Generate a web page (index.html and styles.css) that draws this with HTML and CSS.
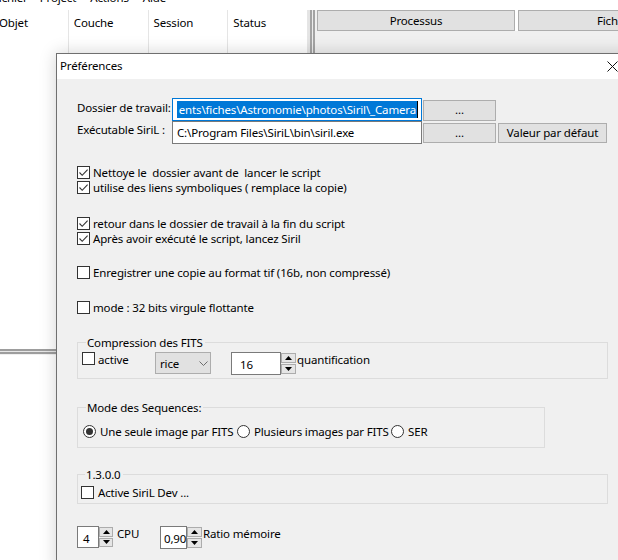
FILE: index.html
```html
<!DOCTYPE html>
<html lang="fr">
<head>
<meta charset="utf-8">
<title>Préférences</title>
<link rel="stylesheet" href="styles.css">
</head>
<body>
<div class="app">
  <div class="menubar">
    <span class="menu menu-first">Fichier</span>
    <span class="menu menu-project">Project</span>
    <span class="menu menu-actions">Actions</span>
    <span class="menu menu-aide">Aide</span>
  </div>
  <div class="main">
    <div class="left">
      <div class="thead">
        <div class="th th-first">Objet</div>
        <div class="th">Couche</div>
        <div class="th">Session</div>
        <div class="th">Status</div>
      </div>
      <div class="lbody"></div>
      <div class="hsplit"></div>
      <div class="lbody2"></div>
    </div>
    <div class="vsplit"></div>
    <div class="right">
      <div class="tabs">
        <div class="tabbtn">Processus</div>
        <div class="tabbtn">Fichiers</div>
      </div>
    </div>
  </div>

  <div class="dialog">
    <div class="titlebar">
      <span class="title">Préférences</span>
      <svg class="close" width="11" height="11" viewBox="0 0 11 11"><path d="M0.5 0.5 L10.5 10.5 M10.5 0.5 L0.5 10.5" stroke="#111" stroke-width="1" fill="none"/></svg>
    </div>
    <div class="dbody">
      <div class="path-row row-1">
        <div class="plabel plabel-1">Dossier de travail:</div>
        <div class="pinput pinput-focus"><span class="sel">ents\fiches\Astronomie\photos\Siril\_Camera</span><span class="caret"></span></div>
        <div class="btn btn-dots btn-dots-1">...</div>
      </div>
      <div class="path-row row-2">
        <div class="plabel plabel-2">Exécutable SiriL :</div>
        <div class="pinput">C:\Program Files\SiriL\bin\siril.exe</div>
        <div class="btn btn-dots btn-dots-2">...</div>
        <div class="btn btn-default">Valeur par défaut</div>
      </div>

      <div class="checks checks-a">
        <div class="check"><span class="cb"><svg width="11" height="11" viewBox="0 0 11 11"><path d="M1.5 5.5 L4.2 8.3 L9.6 2.6" stroke="#333" stroke-width="1.1" fill="none"/></svg></span><span class="ctext">Nettoye le&nbsp; dossier avant de&nbsp; lancer le script</span></div>
        <div class="check"><span class="cb"><svg width="11" height="11" viewBox="0 0 11 11"><path d="M1.5 5.5 L4.2 8.3 L9.6 2.6" stroke="#333" stroke-width="1.1" fill="none"/></svg></span><span class="ctext">utilise des liens symboliques ( remplace la copie)</span></div>
      </div>
      <div class="checks checks-b">
        <div class="check"><span class="cb"><svg width="11" height="11" viewBox="0 0 11 11"><path d="M1.5 5.5 L4.2 8.3 L9.6 2.6" stroke="#333" stroke-width="1.1" fill="none"/></svg></span><span class="ctext">retour dans le dossier de travail à la fin du script</span></div>
        <div class="check"><span class="cb"><svg width="11" height="11" viewBox="0 0 11 11"><path d="M1.5 5.5 L4.2 8.3 L9.6 2.6" stroke="#333" stroke-width="1.1" fill="none"/></svg></span><span class="ctext">Après avoir exécuté le script, lancez Siril</span></div>
      </div>
      <div class="checks checks-c">
        <div class="check"><span class="cb"></span><span class="ctext">Enregistrer une copie au format tif (16b, non compressé)</span></div>
      </div>
      <div class="checks checks-d">
        <div class="check"><span class="cb"></span><span class="ctext">mode : 32 bits virgule flottante</span></div>
      </div>

      <fieldset class="group group-fits">
        <legend class="glegend glegend-fits">Compression des FITS</legend>
        <div class="fits-row">
          <div class="check check-top fits-active"><span class="cb"></span><span class="ctext">active</span></div>
          <div class="select">
            <span class="select-text">rice</span>
            <svg class="chev" width="9" height="5" viewBox="0 0 9 5"><path d="M0.5 0.5 L4.5 4.5 L8.5 0.5" stroke="#6d6d6d" stroke-width="1" fill="none"/></svg>
          </div>
          <div class="spin spin-q">
            <div class="spin-input spin-input-q">16</div>
            <div class="spin-btns">
              <div class="spin-btn"><svg width="7" height="4" viewBox="0 0 7 4"><path d="M0 4 L3.5 0 L7 4 Z" fill="#000"/></svg></div>
              <div class="spin-btn"><svg width="7" height="4" viewBox="0 0 7 4"><path d="M0 0 L3.5 4 L7 0 Z" fill="#000"/></svg></div>
            </div>
          </div>
          <span class="spin-label spin-label-q">quantification</span>
        </div>
      </fieldset>

      <fieldset class="group group-mode">
        <legend class="glegend glegend-mode">Mode des Sequences:</legend>
        <div class="radio-row">
          <div class="radio-item"><span class="radio radio-on"><span class="dot"></span></span><span class="ctext">Une seule image par FITS</span></div>
          <div class="radio-item"><span class="radio"></span><span class="ctext">Plusieurs images par FITS</span></div>
          <div class="radio-item radio-last"><span class="radio"></span><span class="ctext">SER</span></div>
        </div>
      </fieldset>

      <fieldset class="group group-ver">
        <legend class="glegend glegend-ver">1.3.0.0</legend>
        <div class="ver-row">
          <div class="check check-ver"><span class="cb"></span><span class="ctext">Active SiriL Dev ...</span></div>
        </div>
      </fieldset>

      <div class="cpu-row">
        <div class="spin spin-cpu">
          <div class="spin-input spin-input-cpu">4</div>
          <div class="spin-btns">
            <div class="spin-btn"><svg width="7" height="4" viewBox="0 0 7 4"><path d="M0 4 L3.5 0 L7 4 Z" fill="#000"/></svg></div>
            <div class="spin-btn"><svg width="7" height="4" viewBox="0 0 7 4"><path d="M0 0 L3.5 4 L7 0 Z" fill="#000"/></svg></div>
          </div>
          <span class="spin-label spin-label-cpu">CPU</span>
        </div>
        <div class="spin spin-mem">
          <div class="spin-input spin-input-mem">0,90</div>
          <div class="spin-btns">
            <div class="spin-btn"><svg width="7" height="4" viewBox="0 0 7 4"><path d="M0 4 L3.5 0 L7 4 Z" fill="#000"/></svg></div>
            <div class="spin-btn"><svg width="7" height="4" viewBox="0 0 7 4"><path d="M0 0 L3.5 4 L7 0 Z" fill="#000"/></svg></div>
          </div>
          <span class="spin-label spin-label-mem">Ratio mémoire</span>
        </div>
      </div>
    </div>
  </div>
</div>
</body>
</html>
```

FILE: styles.css
```css
* { box-sizing: border-box; }
html, body { margin: 0; padding: 0; }
body {
  font-family: "Noto Sans", "Open Sans", sans-serif;
  font-size: 11.5px;
  letter-spacing: -0.15px;
  color: #000;
  background: #fff;
}
.app {
  position: relative;
  width: 618px;
  height: 560px;
  overflow: hidden;
  background: #fff;
}

/* background application */
.menubar {
  height: 10px;
  overflow: hidden;
  background: #fff;
  display: flex;
  white-space: nowrap;
}
.menu {
  display: block;
  line-height: 15px;
  margin-top: -10px;
  color: #000;
}
.menu-first { margin-left: -7px; }
.menu-project { margin-left: 12px; }
.menu-actions { margin-left: 14px; }
.menu-aide { margin-left: 14px; }

.main {
  display: flex;
  height: 550px;
}
.left {
  width: 308px;
  display: flex;
  flex-direction: column;
  background: #fff;
}
.thead {
  display: flex;
  height: 43px;
}
.th {
  width: 80px;
  border-right: 1px solid #e5e5e5;
  padding: 5px 0 0 5px;
  line-height: 15px;
  white-space: nowrap;
}
.th-first {
  width: 69px;
  padding-left: 0;
  text-indent: -1px;
}
.lbody { height: 295px; }
.hsplit {
  height: 7px;
  background: linear-gradient(to bottom, #fff 0, #fff 1px, #9d9d9d 1px, #9d9d9d 3px, #e6e6e6 3px, #e6e6e6 4px, #9d9d9d 4px, #9d9d9d 6px, #f0f0f0 6px);
}
.lbody2 { flex: 1; }
.vsplit {
  width: 9px;
  background: linear-gradient(to right, #e4e4e4 0, #e4e4e4 2px, #a3a3a3 2px, #a3a3a3 4px, #ececec 4px, #ececec 5px, #a3a3a3 5px, #a3a3a3 7px, #f0f0f0 7px);
}
.right {
  flex: 1;
  background: #f0f0f0;
  overflow: hidden;
}
.tabs {
  display: flex;
  gap: 3px;
  background: #fff;
}
.tabbtn {
  flex: 0 0 198px;
  height: 21px;
  background: #e1e1e1;
  border: 1px solid #adadad;
  text-align: center;
  line-height: 19px;
  white-space: nowrap;
}

/* dialog window */
.dialog {
  position: absolute;
  left: 56px;
  top: 53px;
  width: 580px;
  height: 520px;
  border: 1px solid #6f6f6f;
  background: #f0f0f0;
  box-shadow: 0 0 16px rgba(0, 0, 0, 0.18);
}
.titlebar {
  height: 25px;
  background: #fff;
  display: flex;
  align-items: center;
  padding-left: 3px;
}
.title {
  line-height: 15px;
  width: 547px;
  margin-top: -3px;
}
.close {
  margin-top: -1px;
}
.dbody {
  padding: 19px 0 0 20px;
}

.path-row {
  display: flex;
  height: 23px;
}
.plabel {
  width: 95px;
  line-height: 15px;
  white-space: nowrap;
}
.plabel-1 { padding-top: 2px; }
.plabel-2 { padding-top: 1px; }
.pinput {
  width: 250px;
  height: 23px;
  border: 1px solid #7a7a7a;
  background: #fff;
  padding: 2px 0 0 4px;
  line-height: 17px;
  white-space: nowrap;
  overflow: hidden;
  display: flex;
}
.pinput-focus {
  border-color: #0078d7;
  padding-left: 0;
  padding-right: 3px;
  justify-content: flex-end;
}
.sel {
  background: #0078d7;
  color: #fff;
  padding: 0 1px 0 2px;
  height: 17px;
  flex-shrink: 0;
}
.caret {
  width: 1px;
  height: 17px;
  background: #000;
  flex-shrink: 0;
}
.btn {
  background: #e1e1e1;
  border: 1px solid #adadad;
  text-align: center;
  white-space: nowrap;
}
.btn-dots {
  width: 73px;
  margin-left: 1px;
}
.btn-dots-1 { height: 21px; margin-top: 2px; line-height: 17px; }
.btn-dots-2 { height: 20px; margin-top: 2px; line-height: 17px; }
.btn-default {
  width: 109px;
  height: 20px;
  margin-top: 2px;
  margin-left: 2px;
  line-height: 18px;
}

/* checkboxes */
.checks { display: flex; flex-direction: column; }
.checks-a { margin-top: 21px; }
.checks-b { margin-top: 21px; }
.checks-c { margin-top: 19px; }
.checks-d { margin-top: 20px; }
.check {
  display: flex;
  align-items: center;
  height: 15px;
  line-height: 15px;
  white-space: nowrap;
}
.cb {
  width: 13px;
  height: 13px;
  border: 1px solid #333;
  background: #fff;
  margin-right: 3px;
  display: flex;
  flex: 0 0 13px;
}

/* group boxes */
.group {
  margin: 0;
  padding: 0;
  border: 1px solid #dcdcdc;
  min-width: 0;
}
.glegend {
  padding: 0 2px 0 1px;
  line-height: 15px;
  white-space: nowrap;
}
.glegend-fits { margin-left: 4px; }
.glegend-mode { margin-left: 3px; }
.glegend-ver { margin-left: 4px; }
.group-fits {
  width: 531px;
  margin-top: 20px;
  padding: 2px 0 3px 4px;
}
.fits-row {
  display: flex;
  align-items: flex-start;
  height: 23px;
}
.check-top {
  align-items: flex-start;
}
.fits-active {
  width: 73px;
  height: 15px;
}
.fits-active .ctext { margin-top: 0; }
.select {
  width: 56px;
  height: 22px;
  background: #e1e1e1;
  border: 1px solid #adadad;
  display: flex;
  align-items: center;
  padding-left: 4px;
}
.select-text {
  width: 39px;
  line-height: 15px;
  margin-top: 1px;
}
.spin {
  display: flex;
  align-items: flex-start;
}
.spin-q { margin-left: 20px; }
.spin-input {
  height: 23px;
  border: 1px solid #7a7a7a;
  background: #fff;
  line-height: 15px;
  padding: 4px 0 0 6px;
}
.spin-input-q { width: 50px; padding-left: 8px; }
.spin-btns {
  display: flex;
  flex-direction: column;
  width: 15px;
  height: 23px;
  padding-top: 1px;
}
.spin-btn {
  height: 10px;
  margin-bottom: 1px;
  border: 1px solid #acacac;
  background: #e5e5e5;
  display: flex;
  align-items: center;
  justify-content: center;
}
.spin-label {
  line-height: 15px;
  white-space: nowrap;
}
.spin-label-q { margin-left: 1px; padding-top: 0; }

.group-mode {
  width: 468px;
  margin-top: 21px;
  padding: 9px 0 8px 5px;
}
.radio-row {
  display: flex;
  height: 15px;
  align-items: center;
}
.radio-item {
  display: flex;
  align-items: center;
  width: 154px;
  white-space: nowrap;
  line-height: 15px;
}
.radio-last { width: auto; }
.radio {
  width: 13px;
  height: 13px;
  border: 1px solid #333;
  border-radius: 50%;
  background: #fff;
  margin-right: 4px;
  display: flex;
  align-items: center;
  justify-content: center;
  flex: 0 0 13px;
}
.dot {
  width: 7px;
  height: 7px;
  border-radius: 50%;
  background: #333;
}

.group-ver {
  width: 531px;
  margin-top: 19px;
  padding: 3px 0 3px 3px;
}
.ver-row { height: 15px; }
.check-ver .cb { margin-right: 4px; }

.cpu-row {
  display: flex;
  margin-top: 22px;
  align-items: flex-start;
}
.spin-cpu { width: 83px; }
.spin-input-cpu { width: 22px; height: 22px; padding-left: 5px; }
.spin-cpu .spin-btns { width: 14px; height: 22px; }
.spin-label-cpu { margin-left: 4px; }
.spin-input-mem { width: 27px; height: 23px; padding-left: 3px; }
.spin-label-mem { margin-left: 1px; }
```
